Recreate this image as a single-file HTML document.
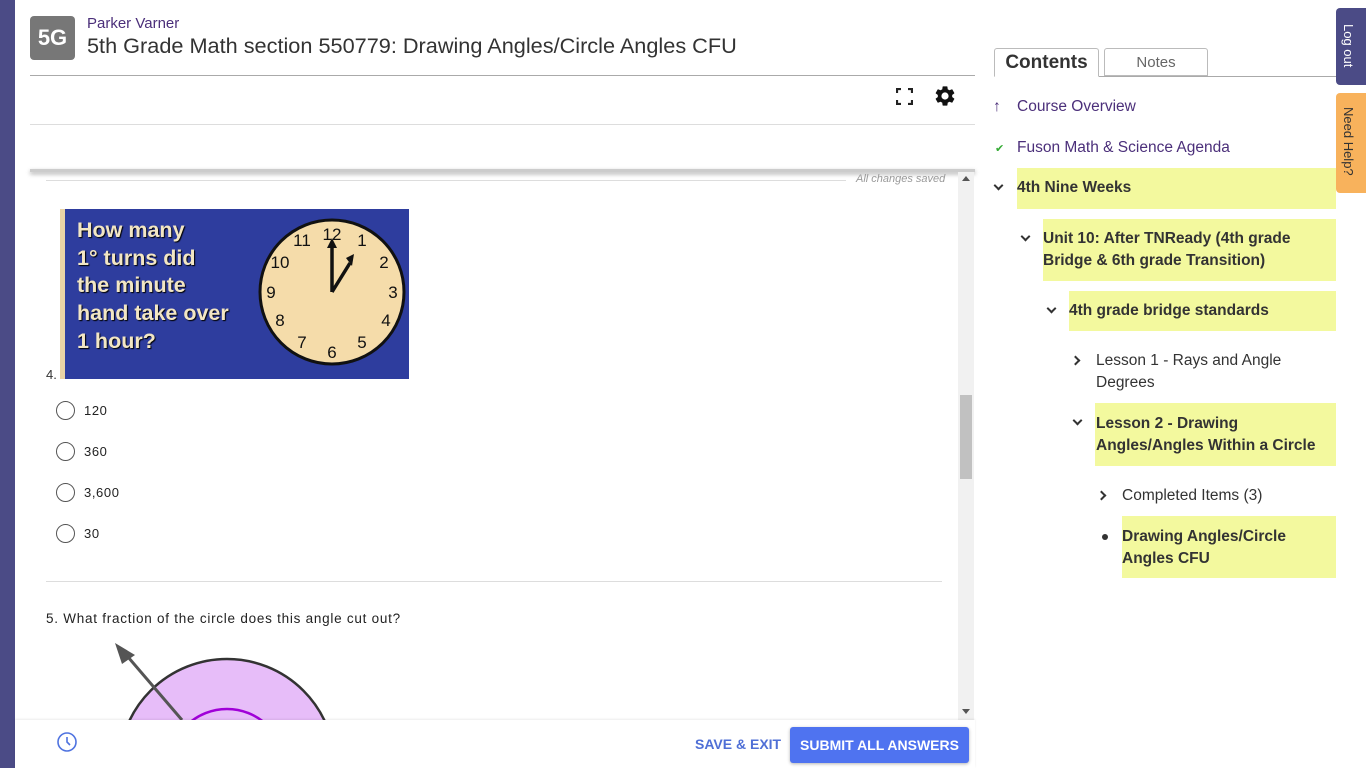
<!DOCTYPE html>
<html><head><meta charset="utf-8"><style>
*{margin:0;padding:0;box-sizing:border-box}
html,body{width:1366px;height:768px;overflow:hidden}
body{background:#fff;font-family:"Liberation Sans",sans-serif;position:relative;color:#333}
.a{position:absolute}
.chev{position:absolute;width:7px;height:7px;border-right:2px solid #333;border-bottom:2px solid #333}
.y{position:absolute;background:#f3f99e}
.t{position:absolute;font-size:15.5px;line-height:22px;white-space:nowrap}
.b{font-weight:bold;color:#333}
.radio{position:absolute;left:56px;width:19px;height:19px;border:1.6px solid #555;border-radius:50%}
.rl{position:absolute;left:84px;font-size:13px;color:#222;letter-spacing:.6px}
</style></head><body>
<div class="a" style="left:0;top:0;width:15px;height:768px;background:#4b4b86"></div>
<div class="a" style="left:30px;top:16px;width:45px;height:44px;background:#777;border-radius:4px;color:#fff;font-weight:bold;font-size:22px;line-height:44px;text-align:center">5G</div>
<div class="a" style="left:87px;top:15px;font-size:15px;color:#4b2f7a">Parker Varner</div>
<div class="a" style="left:87px;top:33px;font-size:21.7px;color:#333;white-space:nowrap">5th Grade Math section 550779: Drawing Angles/Circle Angles CFU</div>
<div class="a" style="left:30px;top:75px;width:945px;height:1px;background:#aaa"></div>
<svg class="a" style="left:896px;top:88px" width="17" height="17" viewBox="0 0 17 17" fill="none" stroke="#222" stroke-width="2.2"><path d="M1 5V1h4M12 1h4v4M16 12v4h-4M5 16H1v-4"/></svg>
<svg class="a" style="left:933px;top:84px" width="24" height="24" viewBox="0 0 24 24"><path fill="#111" d="M19.14 12.94c.04-.3.06-.61.06-.94 0-.32-.02-.64-.07-.94l2.03-1.58a.49.49 0 0 0 .12-.61l-1.92-3.32a.49.49 0 0 0-.59-.22l-2.39.96c-.5-.38-1.03-.7-1.620-.94l-.36-2.54a.48.48 0 0 0-.48-.41h-3.84c-.24 0-.43.17-.47.41l-.36 2.54c-.59.24-1.13.57-1.62.94l-2.39-.96c-.22-.08-.47 0-.59.22L2.74 8.87c-.12.21-.08.47.12.61l2.030 1.58c-.05.3-.09.63-.09.94s.02.64.07.94l-2.03 1.58a.49.49 0 0 0-.12.61l1.92 3.32c.12.22.37.29.59.22l2.39-.96c.5.38 1.03.7 1.62.94l.36 2.54c.05.24.24.41.48.41h3.84c.24 0 .44-.17.47-.41l.36-2.54c.59-.24 1.13-.56 1.62-.94l2.39.96c.22.08.47 0 .59-.22l1.92-3.32c.12-.22.07-.47-.12-.61l-2.01-1.58zM12 15.6A3.6 3.6 0 1 1 12 8.4a3.6 3.6 0 0 1 0 7.2z"/></svg>
<div class="a" style="left:30px;top:124px;width:945px;height:1px;background:#ddd"></div>
<div class="a" style="left:30px;top:169px;width:945px;height:3px;box-shadow:0 2px 4px rgba(0,0,0,.35);background:#ccc"></div>
<div class="a" style="left:958px;top:172px;width:16px;height:548px;background:#f1f1f1"></div>
<div class="a" style="left:960px;top:395px;width:12px;height:84px;background:#c1c1c1"></div>
<div class="a" style="left:962px;top:176px;border-left:4px solid transparent;border-right:4px solid transparent;border-bottom:5px solid #555"></div>
<div class="a" style="left:962px;top:709px;border-left:4px solid transparent;border-right:4px solid transparent;border-top:5px solid #555"></div>
<div class="a" style="left:46px;top:180px;width:800px;height:1px;background:#ddd"></div>
<div class="a" style="left:856px;top:173px;font-size:11px;font-style:italic;color:#999">All changes saved</div>
<div class="a" style="left:60px;top:209px;width:349px;height:170px;background:#2e3d9e;border-left:5px solid #e9d3a6"></div>
<div class="a" style="left:77px;top:217px;font-size:21.5px;line-height:27.7px;font-weight:bold;color:#f2e6c4;text-shadow:1px 1px 1px #000">How many<br>1° turns did<br>the minute<br>hand take over<br>1 hour?</div>
<svg class="a" style="left:258px;top:218px" width="150" height="148" viewBox="0 0 150 148">
<circle cx="74" cy="74" r="72" fill="#f5dcaa" stroke="#111" stroke-width="3"/>
<g font-family="Liberation Sans" font-size="17" fill="#111" text-anchor="middle">
<text x="74" y="22">12</text><text x="104" y="28">1</text><text x="126" y="50">2</text><text x="135" y="80">3</text><text x="128" y="108">4</text><text x="104" y="130">5</text><text x="74" y="140">6</text><text x="44" y="130">7</text><text x="22" y="108">8</text><text x="13" y="80">9</text><text x="22" y="50">10</text><text x="44" y="28">11</text></g>
<path d="M74 74V26M74 74L92 45" stroke="#111" stroke-width="3.5"/>
<path d="M69 30L74 20L79 30Z M88 40L96 36L94 48Z" fill="#111"/>
</svg>
<div class="a" style="left:46px;top:367px;font-size:13px;color:#333">4.</div>
<div class="radio" style="top:401px"></div><div class="rl" style="top:403px">120</div>
<div class="radio" style="top:442px"></div><div class="rl" style="top:444px">360</div>
<div class="radio" style="top:483px"></div><div class="rl" style="top:485px">3,600</div>
<div class="radio" style="top:524px"></div><div class="rl" style="top:526px">30</div>
<div class="a" style="left:46px;top:581px;width:896px;height:1px;background:#ddd"></div>
<div class="a" style="left:46px;top:611px;font-size:13.5px;color:#222;letter-spacing:.75px;white-space:nowrap">5. What fraction of the circle does this angle cut out?</div>
<svg class="a" style="left:100px;top:640px" width="260" height="80" viewBox="0 0 260 80">
<circle cx="127" cy="127" r="108" fill="#e7bdf9" stroke="#333" stroke-width="2.5"/>
<circle cx="127" cy="127" r="58" fill="none" stroke="#a000d8" stroke-width="2.5"/>
<path d="M82 80L22 10" stroke="#555" stroke-width="3"/>
<path d="M15 3L35 15L22 24Z" fill="#555"/>
</svg>
<div class="a" style="left:15px;top:720px;width:960px;height:48px;background:#fff;box-shadow:0 -1px 2px rgba(0,0,0,.08)"></div>
<svg class="a" style="left:57px;top:732px" width="20" height="20" viewBox="0 0 20 20" fill="none" stroke="#4f73e0" stroke-width="1.6"><circle cx="10" cy="10" r="9"/><path d="M10 5v5l3 3"/></svg>
<div class="a" style="left:695px;top:736px;font-size:14px;font-weight:bold;color:#4f6fd6">SAVE &amp; EXIT</div>
<div class="a" style="left:790px;top:727px;width:179px;height:36px;background:#4f73f0;border-radius:3px;box-shadow:0 1px 3px rgba(0,0,0,.3);color:#fff;font-size:14px;font-weight:bold;line-height:36px;text-align:center">SUBMIT ALL ANSWERS</div>
<div class="a" style="left:994px;top:76px;width:342px;height:1px;background:#aaa"></div>
<div class="a" style="left:994px;top:48px;width:105px;height:29px;border:1px solid #bbb;border-bottom:1px solid #fff;border-radius:3px 3px 0 0;background:#fff;font-size:19px;font-weight:bold;line-height:27px;text-align:center;color:#333">Contents</div>
<div class="a" style="left:1104px;top:48px;width:104px;height:28px;border:1px solid #bbb;border-radius:3px 3px 0 0;font-size:15px;line-height:27px;text-align:center;color:#666">Notes</div>
<div class="t" style="left:993px;top:96px;color:#4b2f7a">↑</div>
<div class="t" style="left:1017px;top:96px;color:#4b2f7a">Course Overview</div>
<div class="t" style="left:995px;top:138px;font-size:11px;color:#3a3">✔</div>
<div class="t" style="left:1017px;top:137px;color:#4b2f7a">Fuson Math &amp; Science Agenda</div>
<div class="y" style="left:1017px;top:168px;width:319px;height:41px"></div>
<div class="chev" style="left:995px;top:182px;transform:rotate(45deg)"></div>
<div class="t b" style="left:1017px;top:177px">4th Nine Weeks</div>
<div class="y" style="left:1043px;top:219px;width:293px;height:62px"></div>
<div class="chev" style="left:1022px;top:233px;transform:rotate(45deg)"></div>
<div class="t b" style="left:1043px;top:228px">Unit 10: After TNReady (4th grade<br>Bridge &amp; 6th grade Transition)</div>
<div class="y" style="left:1069px;top:291px;width:267px;height:40px"></div>
<div class="chev" style="left:1048px;top:305px;transform:rotate(45deg)"></div>
<div class="t b" style="left:1069px;top:300px">4th grade bridge standards</div>
<div class="chev" style="left:1072px;top:357px;transform:rotate(-45deg)"></div>
<div class="t" style="left:1096px;top:350px">Lesson 1 - Rays and Angle<br>Degrees</div>
<div class="y" style="left:1095px;top:403px;width:241px;height:63px"></div>
<div class="chev" style="left:1074px;top:417px;transform:rotate(45deg)"></div>
<div class="t b" style="left:1096px;top:413px">Lesson 2 - Drawing<br>Angles/Angles Within a Circle</div>
<div class="chev" style="left:1098px;top:492px;transform:rotate(-45deg)"></div>
<div class="t" style="left:1122px;top:485px">Completed Items (3)</div>
<div class="y" style="left:1122px;top:516px;width:214px;height:62px"></div>
<div class="a" style="left:1102px;top:534px;width:6px;height:6px;border-radius:50%;background:#333"></div>
<div class="t b" style="left:1122px;top:526px">Drawing Angles/Circle<br>Angles CFU</div>
<div class="a" style="left:1336px;top:8px;width:30px;height:77px;background:#4b4b86;border-radius:4px 0 0 4px;overflow:hidden"><div style="position:absolute;left:5px;top:16px;color:#fff;font-size:13px;writing-mode:vertical-rl">Log out</div></div>
<div class="a" style="left:1336px;top:93px;width:30px;height:100px;background:#f8b25c;border-radius:4px 0 0 4px;overflow:hidden"><div style="position:absolute;left:5px;top:14px;color:#333;font-size:13px;writing-mode:vertical-rl;white-space:nowrap">Need Help?</div></div>
</body></html>
